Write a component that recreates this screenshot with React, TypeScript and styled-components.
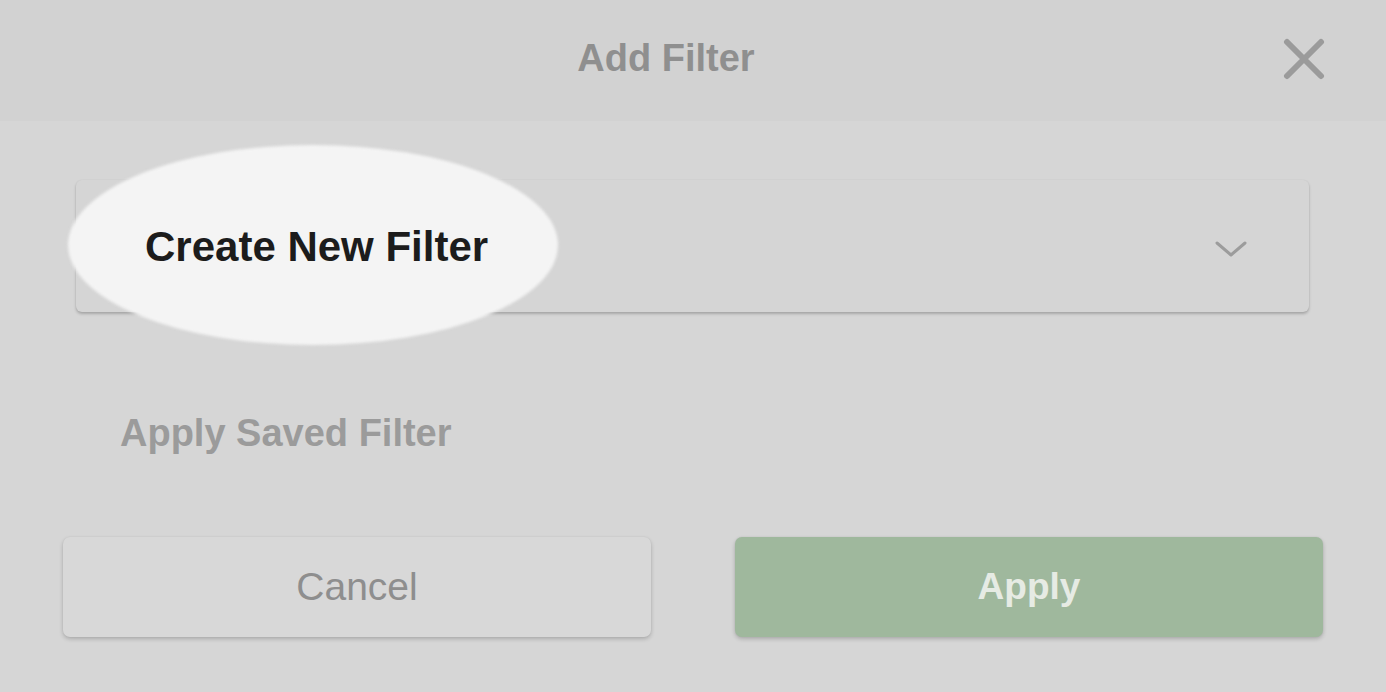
import React from "react";
import styled, { createGlobalStyle } from "styled-components";

const Global = createGlobalStyle`
  html, body { margin: 0; padding: 0; background: #d6d6d6; }
  body { font-family: "Liberation Sans", Arial, sans-serif; }
  * { box-sizing: border-box; }
`;

const Page = styled.div`
  width: 1386px;
  height: 692px;
  display: flex;
  flex-direction: column;
  background: #d6d6d6;
  overflow: hidden;
`;

const Header = styled.header`
  height: 121px;
  flex: none;
  background: #d2d2d2;
  display: grid;
  grid-template-columns: 1fr auto 1fr;
  align-items: center;
  padding: 0 62px 0 62px;
`;

const Title = styled.h1`
  grid-column: 2;
  margin: 0 54px 0 0;
  font-size: 38px;
  font-weight: 700;
  color: #8f8f8f;
  line-height: 1;
  padding-bottom: 6px;
`;

const CloseButton = styled.button`
  grid-column: 3;
  justify-self: end;
  width: 44px;
  height: 44px;
  border: none;
  background: transparent;
  padding: 0;
  display: flex;
  align-items: center;
  justify-content: center;
  margin-top: -4px;
  margin-right: -2px;
`;

const Body = styled.main`
  flex: 1;
  display: flex;
  flex-direction: column;
  padding: 59px 63px 0 63px;
`;

const SelectWrap = styled.div`
  position: relative;
  margin: 0 14px 0 13px;
`;

const Spotlight = styled.div`
  position: absolute;
  left: -8px;
  top: -35px;
  width: 490px;
  height: 200px;
  border-radius: 50%;
  background: #f4f4f4;
  filter: blur(1.5px);
  pointer-events: none;
`;

const Select = styled.div`
  height: 132px;
  border-radius: 6px;
  background: #d5d5d5;
  box-shadow: 0 2px 3px rgba(0, 0, 0, 0.22), 0 0 2px rgba(0, 0, 0, 0.06);
  display: flex;
  align-items: center;
  justify-content: space-between;
  padding: 0 62px 0 69px;
`;

const SelectLabel = styled.span`
  position: relative;
  font-size: 42px;
  font-weight: 700;
  color: #1c1c1c;
  line-height: 1;
  margin-top: 2px;
`;

const Chevron = styled.svg`
  margin-top: 6px;
`;

const SavedLink = styled.div`
  margin: 102px 0 0 57px;
  font-size: 38px;
  font-weight: 700;
  color: #9b9b9b;
  line-height: 1;
`;

const Actions = styled.div`
  display: grid;
  grid-template-columns: 1fr 1fr;
  gap: 84px;
  margin-top: 85px;
`;

const Button = styled.button<{ $primary?: boolean }>`
  height: 100px;
  border: none;
  border-radius: 7px;
  font-family: "Liberation Sans", Arial, sans-serif;
  font-size: ${(p) => (p.$primary ? "37px" : "39px")};
  font-weight: ${(p) => (p.$primary ? 700 : 400)};
  color: ${(p) => (p.$primary ? "#e6ebe4" : "#8e8e8e")};
  background: ${(p) => (p.$primary ? "#9fb89d" : "#d8d8d8")};
  box-shadow: 0 2px 4px rgba(0, 0, 0, 0.2), 0 0 2px rgba(0, 0, 0, 0.05);
  padding: 0;
`;

export default function App() {
  return (
    <Page>
      <Global />
      <Header>
        <Title>Add Filter</Title>
        <CloseButton aria-label="Close">
          <svg width="42" height="42" viewBox="0 0 42 42">
            <path d="M4 4 L38 38 M38 4 L4 38" stroke="#9b9b9b" strokeWidth="6" strokeLinecap="round" fill="none" />
          </svg>
        </CloseButton>
      </Header>
      <Body>
        <SelectWrap>
          <Spotlight />
          <Select>
            <SelectLabel>Create New Filter</SelectLabel>
            <Chevron width="32" height="18" viewBox="0 0 32 18">
              <path d="M2 3 L16 15 L30 3" stroke="#9c9c9c" strokeWidth="3" fill="none" strokeLinecap="round" strokeLinejoin="round" />
            </Chevron>
          </Select>
        </SelectWrap>
        <SavedLink>Apply Saved Filter</SavedLink>
        <Actions>
          <Button>Cancel</Button>
          <Button $primary>Apply</Button>
        </Actions>
      </Body>
    </Page>
  );
}
